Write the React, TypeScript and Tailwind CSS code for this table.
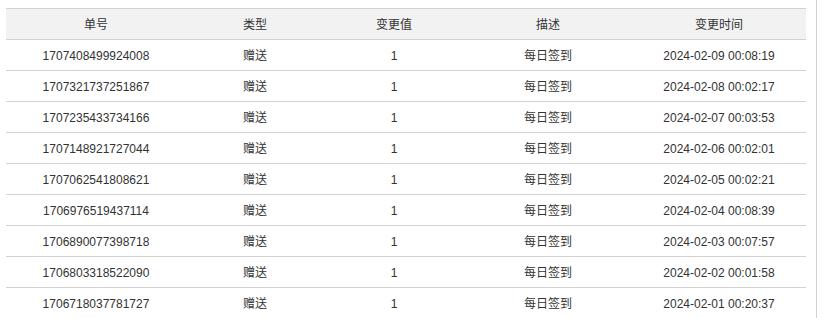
import React from 'react';

interface Record {
  id: string;
  type: string;
  value: number;
  desc: string;
  time: string;
}

const records: Record[] = [
  { id: '1707408499924008', type: '赠送', value: 1, desc: '每日签到', time: '2024-02-09 00:08:19' },
  { id: '1707321737251867', type: '赠送', value: 1, desc: '每日签到', time: '2024-02-08 00:02:17' },
  { id: '1707235433734166', type: '赠送', value: 1, desc: '每日签到', time: '2024-02-07 00:03:53' },
  { id: '1707148921727044', type: '赠送', value: 1, desc: '每日签到', time: '2024-02-06 00:02:01' },
  { id: '1707062541808621', type: '赠送', value: 1, desc: '每日签到', time: '2024-02-05 00:02:21' },
  { id: '1706976519437114', type: '赠送', value: 1, desc: '每日签到', time: '2024-02-04 00:08:39' },
  { id: '1706890077398718', type: '赠送', value: 1, desc: '每日签到', time: '2024-02-03 00:07:57' },
  { id: '1706803318522090', type: '赠送', value: 1, desc: '每日签到', time: '2024-02-02 00:01:58' },
  { id: '1706718037781727', type: '赠送', value: 1, desc: '每日签到', time: '2024-02-01 00:20:37' },
];

const App: React.FC = () => {
  return (
    <div
      className="flex h-[318px] w-[836px] overflow-hidden bg-white text-[12px] text-[#333]"
      style={{ fontFamily: '"Liberation Sans", "Noto Sans CJK SC", sans-serif' }}
    >
      {/* Table area */}
      <div className="w-[816px] shrink-0 pl-[6px] pt-[8px]">
        <table className="w-[800px] table-fixed border-collapse">
          <colgroup>
            <col className="w-[180px]" />
            <col className="w-[138px]" />
            <col className="w-[140px]" />
            <col className="w-[168px]" />
            <col className="w-[174px]" />
          </colgroup>
          <thead>
            <tr className="h-[31px] border-y border-[#d2d2d2] bg-[#f2f2f2]">
              <th className="pt-[2px] font-normal">单号</th>
              <th className="pt-[2px] font-normal">类型</th>
              <th className="pt-[2px] font-normal">变更值</th>
              <th className="pt-[2px] font-normal">描述</th>
              <th className="pt-[2px] font-normal">变更时间</th>
            </tr>
          </thead>
          <tbody>
            {records.map((r) => (
              <tr key={r.id} className="h-[31px] border-b border-[#d2d2d2] text-center">
                <td className="pt-[2px]">{r.id}</td>
                <td className="pt-[2px]">{r.type}</td>
                <td className="pt-[2px]">{r.value}</td>
                <td className="pt-[2px]">{r.desc}</td>
                <td className="pt-[2px]">{r.time}</td>
              </tr>
            ))}
          </tbody>
        </table>
      </div>
      {/* Right scroll edge */}
      <div className="h-full w-px bg-[#d2d2d2]" />
    </div>
  );
};

export default App;
